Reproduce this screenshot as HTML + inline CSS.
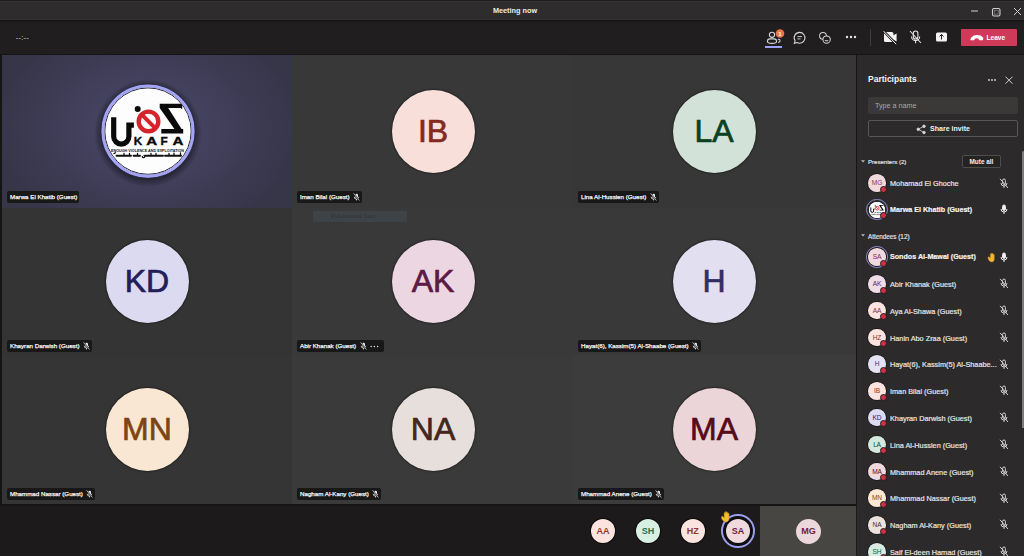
<!DOCTYPE html>
<html><head><meta charset="utf-8">
<style>
*{margin:0;padding:0;box-sizing:border-box}
html,body{width:1024px;height:556px;overflow:hidden;background:#1f1e1e;font-family:"Liberation Sans",sans-serif;color:#fff}
.abs{position:absolute}
#title{left:0;top:0;width:1024px;height:21px;background:#2e2c2d;border-top:1px solid #1f1e1f;border-bottom:1px solid #171617;box-shadow:inset 0 1px 0 #353435,inset 0 -1px 0 #343233}
#title .t{left:0;width:1030px;top:5.3px;text-align:center;font-size:7.3px;font-weight:bold;color:#ececec}
#tool{left:0;top:21px;width:1024px;height:34px;background:#201e1f;border-bottom:1px solid #161516;box-shadow:inset 0 1px 0 #1a191a}
#stage{left:0;top:55px;width:857px;height:451px;background:#161516}
.tile{position:absolute;background:#383838}
.av{position:absolute;width:83px;height:83px;border-radius:50%;text-align:center;font-size:32px;line-height:83px;-webkit-text-stroke:.7px currentColor;box-shadow:0 0 1.5px 1px rgba(0,0,0,.35)}
.tag{position:absolute;height:12px;background:#181818;border-radius:2px;font-size:6.2px;line-height:12px;padding:0 1.8px 0 3px;color:#fafafa;-webkit-text-stroke:.25px #fafafa;white-space:nowrap;display:flex;align-items:center}
.tag .mic{margin-left:3.5px;flex:none}
.tag .dots{margin-left:3.6px;margin-right:3px;flex:none}
#panel{left:857px;top:55px;width:167px;height:501px;background:#2c2a2b}
#bottom{left:0;top:505.5px;width:857px;height:51px;background:#1c1a1b}
.sav{position:absolute;width:24.4px;height:24.4px;border-radius:50%;text-align:center;line-height:24.4px;font-size:9px;font-weight:bold}
.pav{width:17.6px;height:17.6px;border-radius:50%;font-size:6.6px;line-height:17.6px;text-align:center;letter-spacing:-.2px;box-shadow:0 0 0 .8px rgba(0,0,0,.45)}
svg.mo{display:block}
.pn{-webkit-text-stroke:.2px currentColor}
.pdot{width:7px;height:7px;border-radius:50%;background:#cc3146;border:1.3px solid #1f1d1e}
</style></head><body>
<div id="title" class="abs"><div class="t abs">Meeting now</div>
  <svg class="abs" style="left:0;top:0" width="1024" height="21">
    <line x1="971" y1="10" x2="978" y2="10" stroke="#d0d0d0" stroke-width="1"/>
    <rect x="992.5" y="7.5" width="7.5" height="7.5" rx="1.5" fill="none" stroke="#d0d0d0" stroke-width="1.1"/>
    <rect x="994.3" y="9.3" width="3.9" height="3.9" fill="none" stroke="#777" stroke-width=".8"/>
    <path d="M1014 7L1021 14M1021 7L1014 14" stroke="#d0d0d0" stroke-width="1"/>
  </svg>
</div>
<div id="tool" class="abs"><div class="abs" style="left:15.8px;top:11.5px;font-size:7.5px;color:#d8d8d8;letter-spacing:.2px">--:--</div>
  <svg class="abs" style="left:0;top:0" width="1024" height="34">
    <!-- people -->
    <g fill="none" stroke="#d6d6d6" stroke-width="1.1">
      <circle cx="772" cy="13.8" r="2.6"/>
      <path d="M767.4 20.5c0-1.6 1.2-2.6 2.6-2.6h4c1.4 0 2.6 1 2.6 2.6c0 1.3-2 1.9-4.6 1.9s-4.6-.6-4.6-1.9z"/>
      <path d="M777.8 18.3h.6c1 0 1.7.7 1.7 1.8c0 .8-.8 1.3-2 1.4"/>
    </g>
    <circle cx="780" cy="12.5" r="4.3" fill="#e97548"/>
    <text x="780" y="15" font-size="6" font-weight="bold" fill="#fff" text-anchor="middle" font-family="Liberation Sans">1</text>
    <rect x="765" y="25" width="17" height="2" fill="#9ea2ff"/>
    <!-- chat -->
    <path d="M799.6 11.4a5.4 5.4 0 1 1-2.7 10.1l-2.6 .8 .8-2.5a5.4 5.4 0 0 1 4.5-8.4z" fill="none" stroke="#d6d6d6" stroke-width="1.1"/>
    <path d="M797.4 15.6h4.6M797.4 17.9h3.2" stroke="#d6d6d6" stroke-width=".9"/>
    <!-- reactions -->
    <g fill="none" stroke="#d6d6d6" stroke-width="1.05">
      <circle cx="823" cy="14.8" r="3.4"/>
      <circle cx="826.6" cy="18.6" r="3.7" fill="#1f1e1e"/>
      <path d="M825 19.2c.4.8 2.6.8 3.1 0"/>
    </g>
    <g fill="#e6e6e6"><circle cx="847" cy="16" r="1.2"/><circle cx="851" cy="16" r="1.2"/><circle cx="855" cy="16" r="1.2"/></g>
    <line x1="870.5" y1="8" x2="870.5" y2="25" stroke="#3d3d3d" stroke-width="1"/>
    <!-- camera off -->
    <rect x="884" y="11" width="9.4" height="10" rx="1.6" fill="#f4f4f4"/>
    <path d="M893 14.6l3.6-2.2v8.2l-3.6-2.2z" fill="#f4f4f4"/>
    <path d="M884.6 11.2l11.6 12" stroke="#1f1e1e" stroke-width="2.4"/>
    <path d="M883.6 10.2l12.6 13" stroke="#f4f4f4" stroke-width="1"/>
    <!-- mic off -->
    <g fill="none" stroke="#e6e6e6" stroke-width="1.1">
      <rect x="913.3" y="10" width="4.6" height="8" rx="2.3"/>
      <path d="M911.5 15.5a4.1 4.1 0 0 0 8.2 0M915.6 19.6v2.6"/>
      <path d="M910 10l11 12" stroke-width="1.1"/>
    </g>
    <!-- share -->
    <rect x="936" y="11.5" width="11" height="9" rx="1.5" fill="#f4f4f4"/>
    <path d="M941.5 18.5v-5M939.5 15.5l2-2 2 2" stroke="#1f1e1e" stroke-width="1" fill="none"/>
  </svg>
  <div class="abs" style="left:961px;top:8px;width:56px;height:17px;background:#cf3a58;border-radius:1px"></div>
  <svg class="abs" style="left:961px;top:8px" width="56" height="17">
    <path d="M10.8 9c2.4-3 8.4-3 10.8 0l-.2 1.7-2.9-.2-.5-1.4c-1.4-.6-3.2-.6-4.6 0l-.5 1.4-2.9.2z" fill="#fff" stroke="#fff" stroke-width="1.3" stroke-linejoin="round"/>
  </svg>
  <div class="abs" style="left:986.5px;top:12.6px;font-size:6.6px;font-weight:bold;color:#fff">Leave</div>
</div>
</div>
<div id="stage" class="abs">
  <div class="tile" style="left:2px;top:0;width:290px;height:153px;background:radial-gradient(ellipse 150px 110px at 50% 47%,#4b4967 0%,#44425f 35%,#3d3b54 70%,#373649 100%)"></div>
  <div class="tile" style="left:292px;top:0;width:280px;height:153px;background:#383838"></div>
  <div class="tile" style="left:572px;top:0;width:283.5px;height:153px;background:#373737"></div>
  <div class="tile" style="left:2px;top:153px;width:290px;height:147px;background:#343434"></div>
  <div class="tile" style="left:292px;top:153px;width:280px;height:147px;background:#393939"></div>
  <div class="tile" style="left:572px;top:153px;width:283.5px;height:147px;background:#393939"></div>
  <div class="tile" style="left:2px;top:300px;width:290px;height:149px;background:#353535"></div>
  <div class="tile" style="left:292px;top:300px;width:280px;height:149px;background:#3a3a3a"></div>
  <div class="tile" style="left:572px;top:300px;width:283.5px;height:149px;background:#3c3c3c"></div>
</div>
<svg class="abs" style="left:0;top:0" width="300" height="210"><defs><radialGradient id="sh" cx="148" cy="133" r="54" gradientUnits="userSpaceOnUse"><stop offset="0.84" stop-color="#000" stop-opacity=".45"/><stop offset="1" stop-color="#000" stop-opacity="0"/></radialGradient></defs><circle cx="148" cy="133" r="54" fill="url(#sh)"/><circle cx="148" cy="131.1" r="44" fill="#fdfdfd"/>
<path d="M113.7 117.3V136.5a7.6 7.6 0 0 0 15.2 0V125.2h5" fill="none" stroke="#0a0a0a" stroke-width="5.2"/>
<circle cx="137.7" cy="108.9" r="3" fill="#0a0a0a"/>
<circle cx="148.5" cy="121.4" r="9.8" fill="none" stroke="#d4252c" stroke-width="4.4"/>
<path d="M141.8 114.6L155.2 128.2" stroke="#d4252c" stroke-width="4"/>
<path d="M159.7 103.8H182.2V109.2L180.6 107.9H168.2L181.6 129H183.2V133.5H161.3V129H174.4L159.7 107.9z" fill="#0a0a0a"/>
<g font-family="Liberation Sans" font-weight="bold" font-size="11.2" fill="#0a0a0a" stroke="#0a0a0a" stroke-width=".35"><text transform="translate(133.8 145.2) scale(1.05 1)">K</text><text transform="translate(146.2 145.2) scale(1.35 1)">A</text><text transform="translate(160.6 145.2) scale(1.05 1)">F</text><text transform="translate(172.4 145.2) scale(1.35 1)">A</text></g>
<text x="111" y="151.7" font-family="Liberation Sans" font-weight="bold" font-size="3.5" textLength="73" lengthAdjust="spacingAndGlyphs" fill="#111">ENOUGH VIOLENCE AND EXPLOITATION</text>
<g stroke="#111" stroke-linecap="round" fill="none"><path d="M116.5 155.8H131M133.5 155.8H140M145.5 155.8H163M165 155.8H181" stroke-width="1.9"/><path d="M114 153.6l1.5-.8M124 155.5v-2M129.5 155.5v-2M137.5 155.5v-2.2M142.3 156.4a1.2 1.2 0 1 0 1.8-1M151 155.5v-2M156 155.5v-2M169 155.5v-2M174 155.5v-2.4M180.5 155.5v-2.6" stroke-width="1.3"/></g><circle cx="148" cy="131.1" r="43.2" fill="none" stroke="#2b2a40" stroke-width="1"/><circle cx="148" cy="131.1" r="45.3" fill="none" stroke="#a3a4f4" stroke-width="3.1"/><circle cx="148" cy="131.1" r="47.2" fill="none" stroke="#24233a" stroke-width=".9" opacity=".8"/></svg>
<div class="av" style="left:391.5px;top:89.9px;background:#f8dfda;color:#842a1c">IB</div>
<div class="av" style="left:672.5px;top:89.9px;background:#d3e2d9;color:#0b4123">LA</div>
<div class="av" style="left:105.5px;top:239.9px;background:#dcdaf0;color:#231e5a">KD</div>
<div class="av" style="left:391.5px;top:239.9px;background:#ebd6e2;color:#5c1a44">AK</div>
<div class="av" style="left:672.5px;top:239.9px;background:#e2e0f0;color:#332c64">H</div>
<div class="av" style="left:105.5px;top:387.9px;background:#fae7d3;color:#7d4512">MN</div>
<div class="av" style="left:391.5px;top:387.9px;background:#e7dfdb;color:#44261c">NA</div>
<div class="av" style="left:672.5px;top:387.9px;background:#ecd5d9;color:#560b19">MA</div>

<div class="tag" style="left:7px;top:191px"><span>Marwa El Khatib (Guest)</span></div>
<div class="tag" style="left:297px;top:191px"><span>Iman Bilal (Guest)</span><svg class="mic" width="7" height="8" viewBox="0 0 7 8"><rect x="2.2" y=".8" width="2.8" height="4.4" rx="1.4" fill="#f0f0f0"/><path d="M1.2 3.8a2.3 2.3 0 0 0 4.6 0M3.5 6v1.4" fill="none" stroke="#e8e8e8" stroke-width=".8"/><path d="M.8 .6l5.6 6.8" stroke="#1b1b1b" stroke-width="1.4"/><path d="M.6 .3l5.8 7.2" stroke="#e8e8e8" stroke-width=".7"/></svg></div>
<div class="tag" style="left:578px;top:191px"><span>Lina Al-Hussien (Guest)</span><svg class="mic" width="7" height="8" viewBox="0 0 7 8"><rect x="2.2" y=".8" width="2.8" height="4.4" rx="1.4" fill="#f0f0f0"/><path d="M1.2 3.8a2.3 2.3 0 0 0 4.6 0M3.5 6v1.4" fill="none" stroke="#e8e8e8" stroke-width=".8"/><path d="M.8 .6l5.6 6.8" stroke="#1b1b1b" stroke-width="1.4"/><path d="M.6 .3l5.8 7.2" stroke="#e8e8e8" stroke-width=".7"/></svg></div>
<div class="tag" style="left:7px;top:340px"><span>Khayran Darwish (Guest)</span><svg class="mic" width="7" height="8" viewBox="0 0 7 8"><rect x="2.2" y=".8" width="2.8" height="4.4" rx="1.4" fill="#f0f0f0"/><path d="M1.2 3.8a2.3 2.3 0 0 0 4.6 0M3.5 6v1.4" fill="none" stroke="#e8e8e8" stroke-width=".8"/><path d="M.8 .6l5.6 6.8" stroke="#1b1b1b" stroke-width="1.4"/><path d="M.6 .3l5.8 7.2" stroke="#e8e8e8" stroke-width=".7"/></svg></div>
<div class="tag" style="left:297px;top:340px"><span>Abir Khanak (Guest)</span><svg class="mic" width="7" height="8" viewBox="0 0 7 8"><rect x="2.2" y=".8" width="2.8" height="4.4" rx="1.4" fill="#f0f0f0"/><path d="M1.2 3.8a2.3 2.3 0 0 0 4.6 0M3.5 6v1.4" fill="none" stroke="#e8e8e8" stroke-width=".8"/><path d="M.8 .6l5.6 6.8" stroke="#1b1b1b" stroke-width="1.4"/><path d="M.6 .3l5.8 7.2" stroke="#e8e8e8" stroke-width=".7"/></svg><svg class="dots" width="9" height="3"><circle cx="1.2" cy="1.5" r=".75" fill="#e0e0e0"/><circle cx="4.4" cy="1.5" r=".75" fill="#e0e0e0"/><circle cx="7.6" cy="1.5" r=".75" fill="#e0e0e0"/></svg></div>
<div class="tag" style="left:578px;top:340px"><span>Hayat(6), Kassim(5) Al-Shaabe (Guest)</span><svg class="mic" width="7" height="8" viewBox="0 0 7 8"><rect x="2.2" y=".8" width="2.8" height="4.4" rx="1.4" fill="#f0f0f0"/><path d="M1.2 3.8a2.3 2.3 0 0 0 4.6 0M3.5 6v1.4" fill="none" stroke="#e8e8e8" stroke-width=".8"/><path d="M.8 .6l5.6 6.8" stroke="#1b1b1b" stroke-width="1.4"/><path d="M.6 .3l5.8 7.2" stroke="#e8e8e8" stroke-width=".7"/></svg></div>
<div class="tag" style="left:7px;top:488px"><span>Mhammad Nassar (Guest)</span><svg class="mic" width="7" height="8" viewBox="0 0 7 8"><rect x="2.2" y=".8" width="2.8" height="4.4" rx="1.4" fill="#f0f0f0"/><path d="M1.2 3.8a2.3 2.3 0 0 0 4.6 0M3.5 6v1.4" fill="none" stroke="#e8e8e8" stroke-width=".8"/><path d="M.8 .6l5.6 6.8" stroke="#1b1b1b" stroke-width="1.4"/><path d="M.6 .3l5.8 7.2" stroke="#e8e8e8" stroke-width=".7"/></svg></div>
<div class="tag" style="left:297px;top:488px"><span>Nagham Al-Kany (Guest)</span><svg class="mic" width="7" height="8" viewBox="0 0 7 8"><rect x="2.2" y=".8" width="2.8" height="4.4" rx="1.4" fill="#f0f0f0"/><path d="M1.2 3.8a2.3 2.3 0 0 0 4.6 0M3.5 6v1.4" fill="none" stroke="#e8e8e8" stroke-width=".8"/><path d="M.8 .6l5.6 6.8" stroke="#1b1b1b" stroke-width="1.4"/><path d="M.6 .3l5.8 7.2" stroke="#e8e8e8" stroke-width=".7"/></svg></div>
<div class="tag" style="left:578px;top:488px"><span>Mhammad Anene (Guest)</span><svg class="mic" width="7" height="8" viewBox="0 0 7 8"><rect x="2.2" y=".8" width="2.8" height="4.4" rx="1.4" fill="#f0f0f0"/><path d="M1.2 3.8a2.3 2.3 0 0 0 4.6 0M3.5 6v1.4" fill="none" stroke="#e8e8e8" stroke-width=".8"/><path d="M.8 .6l5.6 6.8" stroke="#1b1b1b" stroke-width="1.4"/><path d="M.6 .3l5.8 7.2" stroke="#e8e8e8" stroke-width=".7"/></svg></div>
<div class="abs" style="left:313px;top:211px;width:94px;height:11px;background:#3e4347;border-radius:1px"></div><div class="abs" style="left:331px;top:213.3px;font-size:5.8px;color:#2e3236">Pull-request Step</div>

<div id="bottom" class="abs"></div>
<div class="abs sav" style="left:590.8px;top:519px;background:#fbe3df;color:#933a2a;box-shadow:0 0 0 1.2px #0e0e0e">AA</div>
<div class="abs sav" style="left:635.8px;top:519px;background:#d8efe4;color:#267050;box-shadow:0 0 0 1.2px #0e0e0e">SH</div>
<div class="abs sav" style="left:680.5px;top:519px;background:#fbe3df;color:#933a2a;box-shadow:0 0 0 1.2px #0e0e0e">HZ</div>
<div class="abs" style="left:721px;top:514.4px;width:33.8px;height:33.8px;border-radius:50%;border:2.2px solid #9c9ff0;background:#0e0e0e"></div>
<div class="abs sav" style="left:725.7px;top:519px;background:#efd9de;color:#6c1f33">SA</div>
<svg class="abs" style="left:720px;top:510px" width="12" height="13" viewBox="0 0 12 13"><path d="M4 11.5C2.2 10 1.2 8.3 1.5 7c.3-1 1.3-.9 1.8-.2l.9 1.1V3.2c0-.9 1.2-.9 1.2 0V2.2c0-.9 1.2-.9 1.2 0v.6c0-.9 1.2-.9 1.2 0v1c0-.9 1.2-.9 1.2 0V8.5c0 2.2-1.3 3.5-3.2 3.5z" fill="#f4bb35" stroke="#d2961a" stroke-width=".5"/></svg>
<div class="abs" style="left:760px;top:506px;width:96px;height:50px;background:#484643"></div>
<div class="abs sav" style="left:796px;top:518.8px;width:25px;height:25px;line-height:25px;background:#ecd8dc;color:#6c1f33">MG</div>

<div id="panel" class="abs"></div>
<div class="abs" style="left:868px;top:74.3px;font-size:8.5px;font-weight:bold;color:#f2f2f2">Participants</div>
<svg class="abs" style="left:985px;top:74px" width="32" height="12"><g fill="#d8d8d8"><circle cx="4" cy="6" r=".9"/><circle cx="7" cy="6" r=".9"/><circle cx="10" cy="6" r=".9"/></g><path d="M20.5 2.7l7 7M27.5 2.7l-7 7" stroke="#d0d0d0" stroke-width="1"/></svg>
<div class="abs" style="left:868px;top:97px;width:150px;height:17px;background:#3a3938;border-radius:2px"></div>
<div class="abs" style="left:875px;top:100.5px;font-size:7.2px;color:#a8a8a8">Type a name</div>
<div class="abs" style="left:868px;top:120px;width:150px;height:17px;border:1px solid #5a5856;border-radius:2px"></div>
<svg class="abs" style="left:915.5px;top:123.5px" width="11" height="11"><g fill="#d8d8d8" stroke="#d8d8d8" stroke-width=".8"><circle cx="8" cy="2.3" r="1.3"/><circle cx="2.3" cy="5.3" r="1.3"/><circle cx="8" cy="8.5" r="1.3"/><path d="M3.5 4.6l3.3-1.7M3.5 6l3.3 1.8" fill="none"/></g></svg>
<div class="abs" style="left:930px;top:124.6px;font-size:7.06px;font-weight:bold;color:#f2f2f2">Share invite</div>
<svg class="abs" style="left:860px;top:159px" width="6" height="5"><path d="M1 1.2h4L3 3.6z" fill="#bdbdbd"/></svg>
<div class="abs" style="left:868px;top:159.3px;font-size:6.05px;color:#e8e8e8;-webkit-text-stroke:.15px #e8e8e8">Presenters (2)</div>
<div class="abs" style="left:962px;top:155px;width:39px;height:13px;border:1px solid #4e4d4c;border-radius:2px;background:#242323"></div>
<div class="abs" style="left:969.5px;top:158.2px;font-size:6.42px;font-weight:bold;color:#f2f2f2">Mute all</div>
<svg class="abs" style="left:860px;top:233px" width="6" height="5"><path d="M1 1.2h4L3 3.6z" fill="#bdbdbd"/></svg>
<div class="abs" style="left:868px;top:232.8px;font-size:6.33px;color:#e8e8e8;-webkit-text-stroke:.15px #e8e8e8">Attendees (12)</div>
<div class="abs pav" style="left:868.2px;top:174.25px;background:#f0d9dc;color:#8b3a47">MG</div>
<div class="abs pdot" style="left:879.7px;top:185.7px"></div>
<div class="abs pn" style="left:890px;top:179.2px;font-size:7.3px;font-weight:normal;color:#e4e4e4;white-space:nowrap">Mohamad El Ghoche</div>
<div class="abs" style="left:999px;top:177.5px"><svg class="mo" width="10" height="11" viewBox="0 0 10 11"><g fill="none" stroke="#d0d0d0" stroke-width="1"><rect x="3.6" y="1" width="2.8" height="5.4" rx="1.4"/><path d="M2 5a3 3 0 0 0 6 0M5 8v2"/><path d="M1 .8l8 9.2"/></g></svg></div>
<div class="abs" style="left:866.2px;top:198.89999999999998px;width:21.6px;height:21.6px;border-radius:50%;border:1.3px solid #8f90d8;background:#2c2a2b"></div>
<div class="abs" style="left:869px;top:201.7px;width:16px;height:16px;border-radius:50%;background:#fff;overflow:hidden"><svg width="16" height="16" viewBox="104 88 86 86"><g><circle cx="148" cy="131.3" r="45.8" fill="#fdfdfd"/>
<path d="M113.7 117.3V136.5a7.6 7.6 0 0 0 15.2 0V125.2h5" fill="none" stroke="#0a0a0a" stroke-width="5.2"/>
<circle cx="137.7" cy="108.9" r="3" fill="#0a0a0a"/>
<circle cx="148.5" cy="121.4" r="9.8" fill="none" stroke="#d4252c" stroke-width="4.4"/>
<path d="M141.8 114.6L155.2 128.2" stroke="#d4252c" stroke-width="4"/>
<path d="M159.7 103.8H182.2V109.2L180.6 107.9H168.2L181.6 129H183.2V133.5H161.3V129H174.4L159.7 107.9z" fill="#0a0a0a"/>
<g font-family="Liberation Sans" font-weight="bold" font-size="11.2" fill="#0a0a0a" stroke="#0a0a0a" stroke-width=".35"><text transform="translate(133.8 145.2) scale(1.05 1)">K</text><text transform="translate(146.2 145.2) scale(1.35 1)">A</text><text transform="translate(160.6 145.2) scale(1.05 1)">F</text><text transform="translate(172.4 145.2) scale(1.35 1)">A</text></g>
<text x="111" y="151.7" font-family="Liberation Sans" font-weight="bold" font-size="3.5" textLength="73" lengthAdjust="spacingAndGlyphs" fill="#111">ENOUGH VIOLENCE AND EXPLOITATION</text>
<g stroke="#111" stroke-width="1.6" stroke-linecap="round" fill="none"><path d="M114 154.2l1.2-.6M117 156h8.5M124.5 156v-2M128.5 156h9M131 154v2M135 154v2M141 155.3a1 1 0 1 0 2 0M147 156h10.5M150 154v2M154 153.8v2.2M160 156h9M162.5 154v2M166 154v2M171 156h10M174 154v2M179.5 153.5v2.5"/></g></g></svg></div>
<div class="abs pdot" style="left:879.7px;top:212.39999999999998px"></div>
<div class="abs pn" style="left:890px;top:205.9px;font-size:7.15px;font-weight:bold;color:#f4f4f4;white-space:nowrap">Marwa El Khatib (Guest)</div>
<div class="abs" style="left:999px;top:204.2px"><svg class="mo" width="10" height="11" viewBox="0 0 10 11"><g fill="#f0f0f0" stroke="#f0f0f0" stroke-width="1"><rect x="3.6" y="1" width="2.8" height="5.4" rx="1.4"/><path d="M2 5a3 3 0 0 0 6 0M5 8v2" fill="none"/></g></svg></div>
<div class="abs" style="left:866.2px;top:246.39999999999998px;width:21.6px;height:21.6px;border-radius:50%;border:1.3px solid #8f90d8"></div>
<div class="abs pav" style="left:868.2px;top:248.45px;background:#efd9de;color:#7a2a3e">SA</div>
<div class="abs pdot" style="left:879.7px;top:259.9px"></div>
<div class="abs pn" style="left:890px;top:253.4px;font-size:7.15px;font-weight:bold;color:#f4f4f4;white-space:nowrap">Sondos Al-Mawal (Guest)</div>
<div class="abs" style="left:999px;top:251.7px"><svg class="mo" width="10" height="11" viewBox="0 0 10 11"><g fill="#f0f0f0" stroke="#f0f0f0" stroke-width="1"><rect x="3.6" y="1" width="2.8" height="5.4" rx="1.4"/><path d="M2 5a3 3 0 0 0 6 0M5 8v2" fill="none"/></g></svg></div>
<svg class="abs" style="left:987px;top:251.7px" width="10" height="11" viewBox="0 0 10 11"><path d="M3 9.5C1.5 8 .8 6.5 1 5.5c.2-.8 1-.8 1.5-.2l.8 1V2.3c0-.7 1-.7 1 0v-.8c0-.7 1-.7 1 0v.5c0-.7 1-.7 1 0v.8c0-.7 1-.7 1 0V7c0 1.8-1 3-2.5 3z" fill="#f2b534" stroke="#c98a10" stroke-width=".4"/></svg>
<div class="abs pav" style="left:868.2px;top:275.15px;background:#f0dbe8;color:#6a1f4a">AK</div>
<div class="abs pdot" style="left:879.7px;top:286.59999999999997px"></div>
<div class="abs pn" style="left:890px;top:280.1px;font-size:7.3px;font-weight:normal;color:#e4e4e4;white-space:nowrap">Abir Khanak (Guest)</div>
<div class="abs" style="left:999px;top:278.4px"><svg class="mo" width="10" height="11" viewBox="0 0 10 11"><g fill="none" stroke="#d0d0d0" stroke-width="1"><rect x="3.6" y="1" width="2.8" height="5.4" rx="1.4"/><path d="M2 5a3 3 0 0 0 6 0M5 8v2"/><path d="M1 .8l8 9.2"/></g></svg></div>
<div class="abs pav" style="left:868.2px;top:301.85px;background:#fbe3df;color:#8e3324">AA</div>
<div class="abs pdot" style="left:879.7px;top:313.3px"></div>
<div class="abs pn" style="left:890px;top:306.8px;font-size:7.3px;font-weight:normal;color:#e4e4e4;white-space:nowrap">Aya Al-Shawa (Guest)</div>
<div class="abs" style="left:999px;top:305.1px"><svg class="mo" width="10" height="11" viewBox="0 0 10 11"><g fill="none" stroke="#d0d0d0" stroke-width="1"><rect x="3.6" y="1" width="2.8" height="5.4" rx="1.4"/><path d="M2 5a3 3 0 0 0 6 0M5 8v2"/><path d="M1 .8l8 9.2"/></g></svg></div>
<div class="abs pav" style="left:868.2px;top:328.55px;background:#fbe3df;color:#8e3324">HZ</div>
<div class="abs pdot" style="left:879.7px;top:340.0px"></div>
<div class="abs pn" style="left:890px;top:333.5px;font-size:7.3px;font-weight:normal;color:#e4e4e4;white-space:nowrap">Hanin Abo Zraa (Guest)</div>
<div class="abs" style="left:999px;top:331.8px"><svg class="mo" width="10" height="11" viewBox="0 0 10 11"><g fill="none" stroke="#d0d0d0" stroke-width="1"><rect x="3.6" y="1" width="2.8" height="5.4" rx="1.4"/><path d="M2 5a3 3 0 0 0 6 0M5 8v2"/><path d="M1 .8l8 9.2"/></g></svg></div>
<div class="abs pav" style="left:868.2px;top:355.25px;background:#e3e1f4;color:#3b3370">H</div>
<div class="abs pdot" style="left:879.7px;top:366.7px"></div>
<div class="abs pn" style="left:890px;top:360.2px;font-size:7.3px;font-weight:normal;color:#e4e4e4;white-space:nowrap">Hayat(6), Kassim(5) Al-Shaabe...</div>
<div class="abs" style="left:999px;top:358.5px"><svg class="mo" width="10" height="11" viewBox="0 0 10 11"><g fill="none" stroke="#d0d0d0" stroke-width="1"><rect x="3.6" y="1" width="2.8" height="5.4" rx="1.4"/><path d="M2 5a3 3 0 0 0 6 0M5 8v2"/><path d="M1 .8l8 9.2"/></g></svg></div>
<div class="abs pav" style="left:868.2px;top:382.05px;background:#fbe3df;color:#8e3324">IB</div>
<div class="abs pdot" style="left:879.7px;top:393.5px"></div>
<div class="abs pn" style="left:890px;top:387.0px;font-size:7.3px;font-weight:normal;color:#e4e4e4;white-space:nowrap">Iman Bilal (Guest)</div>
<div class="abs" style="left:999px;top:385.3px"><svg class="mo" width="10" height="11" viewBox="0 0 10 11"><g fill="none" stroke="#d0d0d0" stroke-width="1"><rect x="3.6" y="1" width="2.8" height="5.4" rx="1.4"/><path d="M2 5a3 3 0 0 0 6 0M5 8v2"/><path d="M1 .8l8 9.2"/></g></svg></div>
<div class="abs pav" style="left:868.2px;top:408.85px;background:#dddbf2;color:#27235f">KD</div>
<div class="abs pdot" style="left:879.7px;top:420.3px"></div>
<div class="abs pn" style="left:890px;top:413.8px;font-size:7.3px;font-weight:normal;color:#e4e4e4;white-space:nowrap">Khayran Darwish (Guest)</div>
<div class="abs" style="left:999px;top:412.1px"><svg class="mo" width="10" height="11" viewBox="0 0 10 11"><g fill="none" stroke="#d0d0d0" stroke-width="1"><rect x="3.6" y="1" width="2.8" height="5.4" rx="1.4"/><path d="M2 5a3 3 0 0 0 6 0M5 8v2"/><path d="M1 .8l8 9.2"/></g></svg></div>
<div class="abs pav" style="left:868.2px;top:435.75px;background:#d5e8dd;color:#0d4526">LA</div>
<div class="abs pdot" style="left:879.7px;top:447.2px"></div>
<div class="abs pn" style="left:890px;top:440.7px;font-size:7.3px;font-weight:normal;color:#e4e4e4;white-space:nowrap">Lina Al-Hussien (Guest)</div>
<div class="abs" style="left:999px;top:439.0px"><svg class="mo" width="10" height="11" viewBox="0 0 10 11"><g fill="none" stroke="#d0d0d0" stroke-width="1"><rect x="3.6" y="1" width="2.8" height="5.4" rx="1.4"/><path d="M2 5a3 3 0 0 0 6 0M5 8v2"/><path d="M1 .8l8 9.2"/></g></svg></div>
<div class="abs pav" style="left:868.2px;top:462.55px;background:#f0d9dc;color:#5a0c19">MA</div>
<div class="abs pdot" style="left:879.7px;top:474.0px"></div>
<div class="abs pn" style="left:890px;top:467.5px;font-size:7.3px;font-weight:normal;color:#e4e4e4;white-space:nowrap">Mhammad Anene (Guest)</div>
<div class="abs" style="left:999px;top:465.8px"><svg class="mo" width="10" height="11" viewBox="0 0 10 11"><g fill="none" stroke="#d0d0d0" stroke-width="1"><rect x="3.6" y="1" width="2.8" height="5.4" rx="1.4"/><path d="M2 5a3 3 0 0 0 6 0M5 8v2"/><path d="M1 .8l8 9.2"/></g></svg></div>
<div class="abs pav" style="left:868.2px;top:489.35px;background:#fbe9d6;color:#8a4a12">MN</div>
<div class="abs pdot" style="left:879.7px;top:500.8px"></div>
<div class="abs pn" style="left:890px;top:494.3px;font-size:7.3px;font-weight:normal;color:#e4e4e4;white-space:nowrap">Mhammad Nassar (Guest)</div>
<div class="abs" style="left:999px;top:492.6px"><svg class="mo" width="10" height="11" viewBox="0 0 10 11"><g fill="none" stroke="#d0d0d0" stroke-width="1"><rect x="3.6" y="1" width="2.8" height="5.4" rx="1.4"/><path d="M2 5a3 3 0 0 0 6 0M5 8v2"/><path d="M1 .8l8 9.2"/></g></svg></div>
<div class="abs pav" style="left:868.2px;top:516.15px;background:#ebe2de;color:#4b2a20">NA</div>
<div class="abs pdot" style="left:879.7px;top:527.6px"></div>
<div class="abs pn" style="left:890px;top:521.1px;font-size:7.3px;font-weight:normal;color:#e4e4e4;white-space:nowrap">Nagham Al-Kany (Guest)</div>
<div class="abs" style="left:999px;top:519.4px"><svg class="mo" width="10" height="11" viewBox="0 0 10 11"><g fill="none" stroke="#d0d0d0" stroke-width="1"><rect x="3.6" y="1" width="2.8" height="5.4" rx="1.4"/><path d="M2 5a3 3 0 0 0 6 0M5 8v2"/><path d="M1 .8l8 9.2"/></g></svg></div>
<div class="abs pav" style="left:868.2px;top:542.95px;background:#d5ebe2;color:#0d5a3a">SH</div>
<div class="abs pdot" style="left:879.7px;top:554.4000000000001px"></div>
<div class="abs pn" style="left:890px;top:547.9px;font-size:7.3px;font-weight:normal;color:#e4e4e4;white-space:nowrap">Saif El-deen Hamad (Guest)</div>
<div class="abs" style="left:999px;top:546.2px"><svg class="mo" width="10" height="11" viewBox="0 0 10 11"><g fill="none" stroke="#d0d0d0" stroke-width="1"><rect x="3.6" y="1" width="2.8" height="5.4" rx="1.4"/><path d="M2 5a3 3 0 0 0 6 0M5 8v2"/><path d="M1 .8l8 9.2"/></g></svg></div>
<div class="abs" style="left:1021.6px;top:151px;width:2.4px;height:277px;background:#7b7b7b;border-radius:1.2px 1.2px 0 0"></div>

</body></html>
